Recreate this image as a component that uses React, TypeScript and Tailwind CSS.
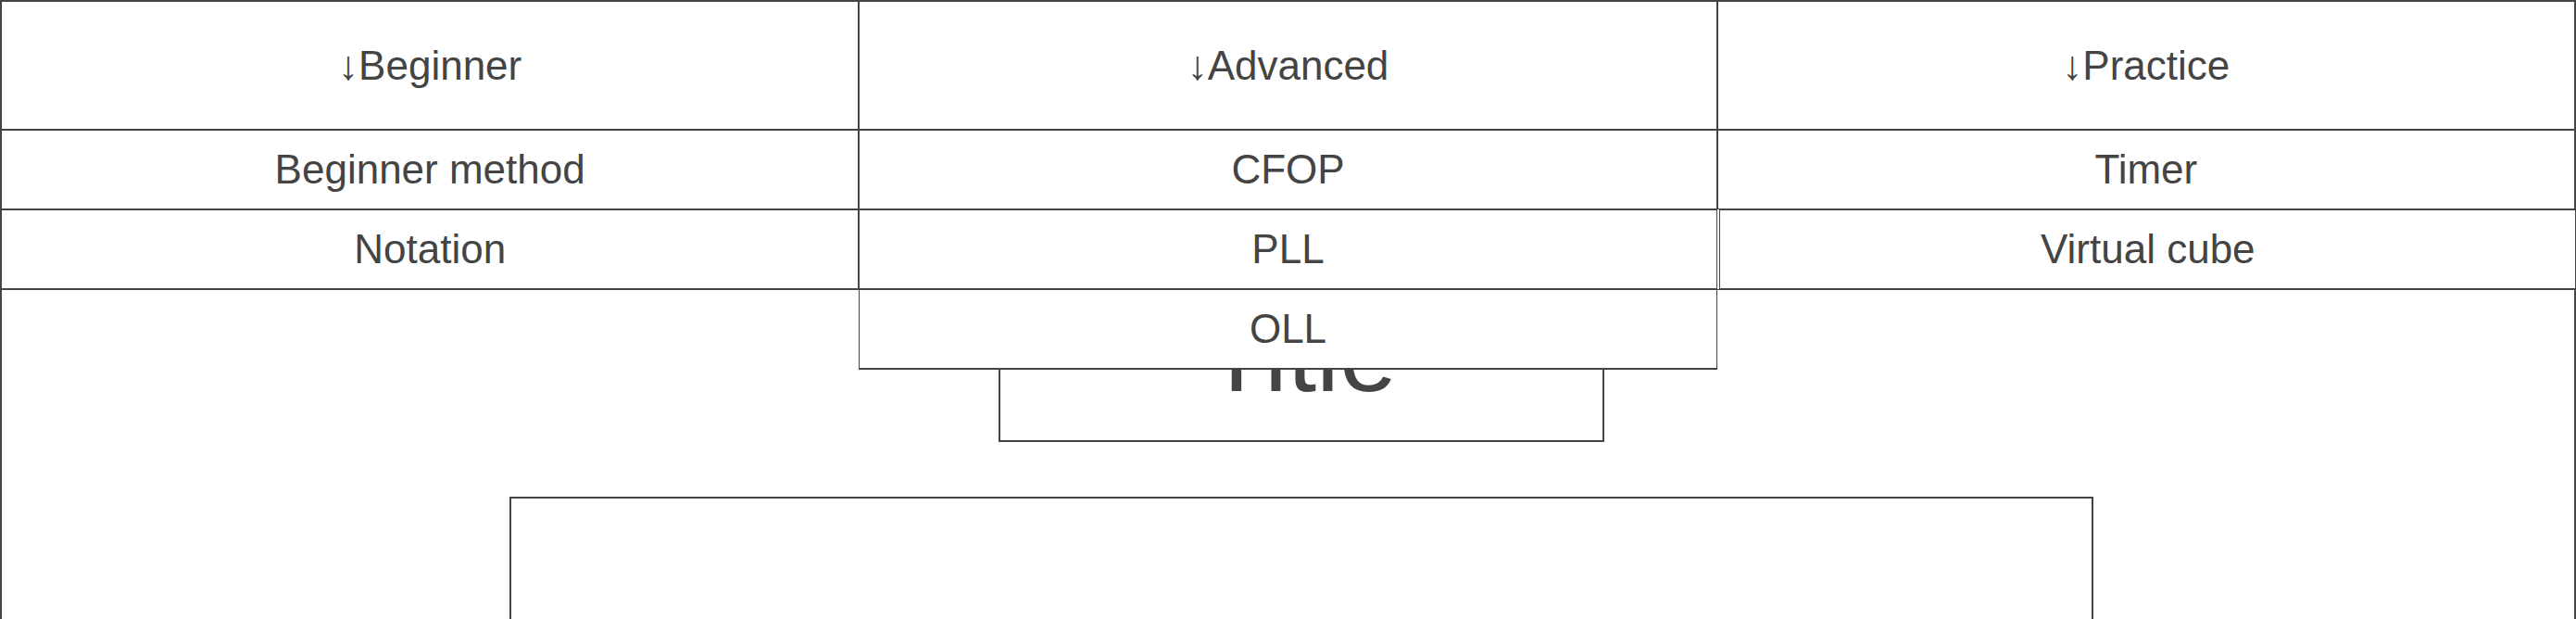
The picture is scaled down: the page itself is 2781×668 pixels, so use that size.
const columns = [
  { title: "Beginner", items: ["Beginner method", "Notation"] },
  { title: "Advanced", items: ["CFOP", "PLL", "OLL"] },
  { title: "Practice", items: ["Timer", "Virtual cube"] },
]

function NavColumn({ title, items, index }: { title: string; items: string[]; index: number }) {
  return (
    <ul className={index === 1 ? "relative z-10 border-b border-[#444] bg-white" : "border-b border-[#444]"}>
      <li className="flex h-[139px] items-center justify-center border border-[#444] bg-white">
        ↓{title}
      </li>
      {items.map((item) => (
        <li
          key={item}
          className={
            item === "Virtual cube"
              ? "ml-[2px] flex h-[86px] w-full items-center justify-center border border-[#444]"
              : "flex h-[86px] items-center justify-center border border-[#444] bg-white"
          }
        >
          {item}
        </li>
      ))}
    </ul>
  )
}

export default function App() {
  return (
    <div className="h-screen overflow-hidden bg-white">
      <div className="h-[1000px] border-x border-t border-[#444] font-['Liberation_Sans',Arial,sans-serif] text-[44px] leading-none text-[#444]">
        {/* Top menu: three columns, the middle one drops over the page */}
        <nav className="grid h-[312px] grid-cols-3 items-start">
          {columns.map((col, i) => (
            <NavColumn key={col.title} title={col.title} items={col.items} index={i} />
          ))}
        </nav>

        {/* Page body */}
        <main className="flex h-[700px] flex-col items-center border-x border-[#444] pl-[28px]">
          <div className="mt-[5px] flex w-[654px] justify-center border-2 border-[#444] pb-[26px]">
            <h1 className="text-[112px] leading-[1.15]">Title</h1>
          </div>
          <div className="mt-[59px] h-[400px] w-[1710px] border-2 border-[#444]" />
        </main>
      </div>
    </div>
  )
}
